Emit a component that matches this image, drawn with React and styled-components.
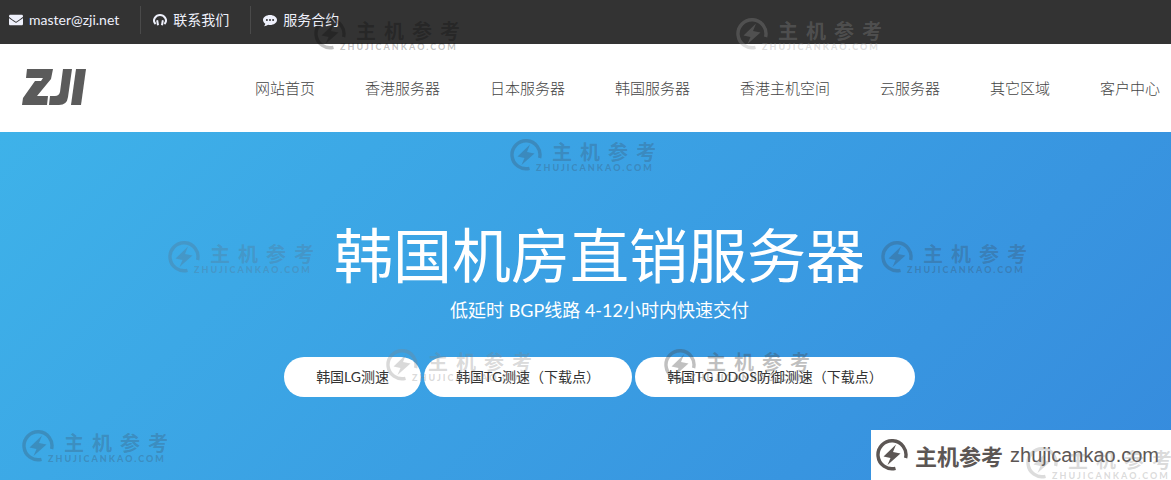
import React from 'react';
import styled, { createGlobalStyle } from 'styled-components';
import { FaEnvelope } from 'react-icons/fa';

const GlobalStyle = createGlobalStyle`
  * {
    box-sizing: border-box;
  }

  body {
    margin: 0;
    font-family: Lato, "Noto Sans CJK SC", sans-serif;
    color: #333;
  }

  a {
    color: inherit;
    text-decoration: none;
  }
`;

const contacts = [
  { icon: 'mail', label: 'master@zji.net', href: 'mailto:master@zji.net' },
  { icon: 'headset', label: '联系我们', href: '#contact' },
  { icon: 'chat', label: '服务合约', href: '#terms' },
];

const menu = [
  '网站首页',
  '香港服务器',
  '日本服务器',
  '韩国服务器',
  '香港主机空间',
  '云服务器',
  '其它区域',
  '客户中心',
];

const speedTests = ['韩国LG测速', '韩国TG测速（下载点）', '韩国TG DDOS防御测速（下载点）'];

const marks = [
  { x: 314, y: 18, tone: 'rgba(0, 0, 0, 0.24)' },
  { x: 736, y: 18, tone: 'rgba(150, 150, 150, 0.3)' },
  { x: 510, y: 139, tone: 'rgba(60, 80, 100, 0.3)' },
  { x: 168, y: 241, tone: 'rgba(90, 110, 130, 0.3)' },
  { x: 881, y: 241, tone: 'rgba(60, 80, 100, 0.32)' },
  { x: 386, y: 349, tone: 'rgba(130, 130, 130, 0.3)' },
  { x: 664, y: 349, tone: 'rgba(70, 70, 70, 0.34)' },
  { x: 22, y: 430, tone: 'rgba(60, 80, 100, 0.3)' },
  { x: 1026, y: 447, tone: 'rgba(130, 130, 130, 0.28)' },
];

const HeadsetIcon = () => (
  <svg width="14" height="14" viewBox="0 0 14 14" aria-hidden="true">
    <path d="M2.600 11C.7 9 .7 6.500 2 4.600a6 6 0 0 1 10 0c1.300 1.900 1.300 4.400-.6 6.400" fill="none" stroke="currentColor" strokeWidth="2" />
    <path d="M3.200 7.600l1.900-.5.9 5-2 .5zM10.800 7.600l-1.900-.5-.9 5 2 .5z" fill="currentColor" />
  </svg>
);

const ChatIcon = () => (
  <svg width="14" height="14" viewBox="0 0 14 14" aria-hidden="true">
    <path
      fillRule="evenodd"
      fill="currentColor"
      d="M7 2c3.900 0 7 2.200 7 5s-3.100 5-7 5c-.7 0-1.300-.1-1.900-.2C4 12.700 2.500 13.200 1 13.300c.8-.8 1.200-1.500 1.300-2.500C.9 9.900 0 8.500 0 7c0-2.800 3.100-5 7-5zM3.900 6a1 1 0 1 0 0 2 1 1 0 0 0 0-2zM7 6a1 1 0 1 0 0 2 1 1 0 0 0 0-2zM10.100 6a1 1 0 1 0 0 2 1 1 0 0 0 0-2z"
    />
  </svg>
);

const icons = {
  mail: <FaEnvelope size={14} aria-hidden="true" />,
  headset: <HeadsetIcon />,
  chat: <ChatIcon />,
};

const ZjiLogo = () => (
  <svg width="64" height="38" viewBox="0 0 64 38" role="img" aria-label="ZJI" fill="#5b5b5b">
    <path d="M5 1H31L29 11L15 28H26L25 37H0L1 30L13 13H19L21 10H4z" />
    <path d="M41 1H50L46 29Q45 37 37 37H27L28 28H33Q37 28 38 24z" />
    <path d="M54 1H64L59 37H49z" />
  </svg>
);

const BoltRing = ({ size }) => (
  <svg width={size} height={size} viewBox="0 0 32 32" aria-hidden="true">
    <path d="M19.500 29.300A14 14 0 1 1 29.600 19" fill="none" stroke="currentColor" strokeWidth="3.400" />
    <path d="M20 5.500L7.500 17.500l7 1.500-3 7L24.500 14.500l-7.500-1.500z" fill="currentColor" />
  </svg>
);

const Page = styled.div`
  position: relative;
  display: flex;
  flex-direction: column;
  min-height: 100vh;
  overflow: hidden;
`;

const TopBar = styled.div`
  display: flex;
  align-items: center;
  height: 44px;
  padding: 0 9px;
  background: #333;
  color: #eef0fb;
`;

const ContactLink = styled.a`
  display: flex;
  align-items: center;
  gap: 6px;
  height: 28px;
  margin-bottom: 4px;
  font-size: 14px;
  line-height: 20px;

  & + & {
    margin-left: 21px;
    padding-left: 12px;
    border-left: 1px solid #4a4a4a;
  }
`;

const Header = styled.header`
  display: flex;
  align-items: center;
  justify-content: space-between;
  height: 88px;
  padding: 0 11px 0 22px;
  background: #fff;
`;

const Nav = styled.nav`
  display: flex;
  gap: 50px;
  color: #444;
  font-size: 15px;
  font-weight: 300;
  line-height: 22px;
  white-space: nowrap;
`;

const Hero = styled.main`
  flex: 1;
  padding: 84px 0 80px 28px;
  background: linear-gradient(135deg, #3eb2e9 0%, #368bdd 100%);
  color: #fff;
  text-align: center;
`;

const Title = styled.h1`
  margin: 0;
  font-size: 59px;
  font-weight: 400;
  line-height: 80px;
`;

const Subtitle = styled.p`
  margin: 0 0 33px;
  font-size: 18px;
  line-height: 28px;
`;

const Actions = styled.div`
  display: flex;
  justify-content: center;
  gap: 3px;
`;

const Pill = styled.a`
  padding: 10px 32px;
  border-radius: 20px;
  background: #fff;
  color: #333;
  font-size: 14px;
  line-height: 20px;
`;

const MarkBox = styled.div`
  position: absolute;
  display: flex;
  color: ${(props) => props.$tone};
  pointer-events: none;
`;

const MarkText = styled.div`
  padding-top: 2px;
`;

const MarkName = styled.div`
  padding-left: 10px;
  font-size: 20px;
  font-weight: 700;
  line-height: 22px;
  letter-spacing: 8px;
  white-space: nowrap;
`;

const MarkDomain = styled.div`
  margin-left: -6px;
  font-size: 9px;
  font-weight: 900;
  line-height: 10px;
  letter-spacing: 2px;
`;

const Badge = styled.a`
  position: absolute;
  right: 0;
  bottom: 0;
  display: flex;
  align-items: center;
  gap: 7px;
  width: 300px;
  height: 50px;
  padding-left: 5px;
  background: #fff;
  color: #5c5654;
  white-space: nowrap;
`;

const BadgeName = styled.span`
  font-size: 22px;
  font-weight: 700;
`;

const BadgeDomain = styled.span`
  font-family: "Liberation Sans", sans-serif;
  font-size: 20px;
`;

const Watermark = ({ x, y, tone }) => (
  <MarkBox $tone={tone} style={{ left: x, top: y }} aria-hidden="true">
    <BoltRing size={32} />
    <MarkText>
      <MarkName>主机参考</MarkName>
      <MarkDomain>ZHUJICANKAO.COM</MarkDomain>
    </MarkText>
  </MarkBox>
);

const App = () => {
  return (
    <Page>
      <GlobalStyle />
      <TopBar>
        {contacts.map((item) => (
          <ContactLink key={item.icon} href={item.href}>
            {icons[item.icon]}
            {item.label}
          </ContactLink>
        ))}
      </TopBar>
      <Header>
        <a href="#home"><ZjiLogo /></a>
        <Nav>
          {menu.map((item) => (
            <a key={item} href="#menu">{item}</a>
          ))}
        </Nav>
      </Header>
      <Hero>
        <Title>韩国机房直销服务器</Title>
        <Subtitle>低延时 BGP线路 4-12小时内快速交付</Subtitle>
        <Actions>
          {speedTests.map((item) => (
            <Pill key={item} href="#test">{item}</Pill>
          ))}
        </Actions>
      </Hero>
      <Badge href="#zhujicankao">
        <BoltRing size={32} />
        <BadgeName>主机参考</BadgeName>
        <BadgeDomain>zhujicankao.com</BadgeDomain>
      </Badge>
      {marks.map((mark) => (
        <Watermark key={mark.x} {...mark} />
      ))}
    </Page>
  );
};

export default App;
